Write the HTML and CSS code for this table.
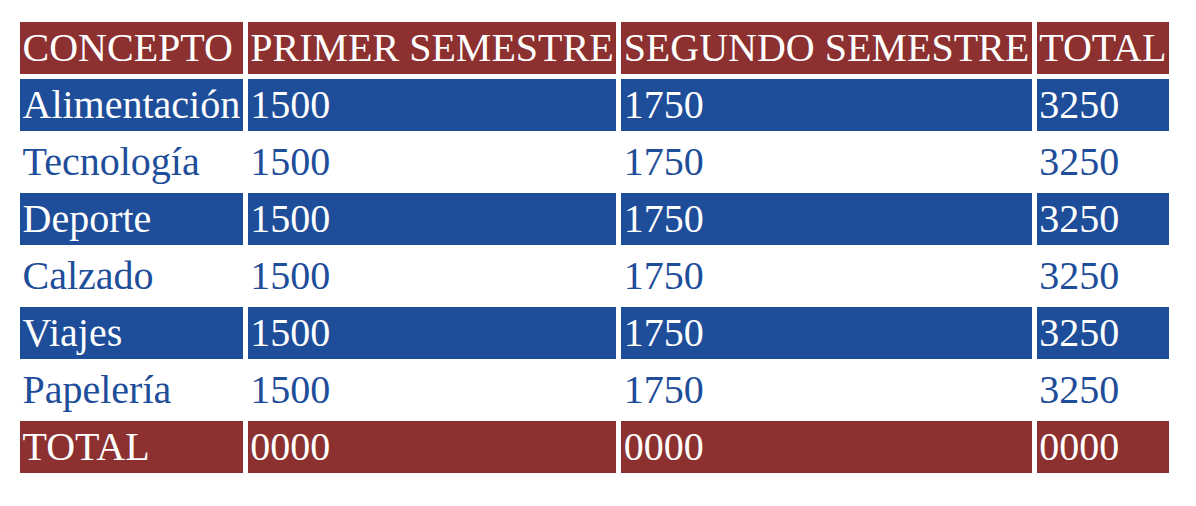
FILE: index.html
```html
<!DOCTYPE html>
<html lang="es">
<head>
<meta charset="utf-8">
<title>Tabla</title>
<link rel="stylesheet" href="styles.css">
</head>
<body>
<table class="tabla">
  <thead>
    <tr class="fila-roja"><td>CONCEPTO</td><td>PRIMER SEMESTRE</td><td>SEGUNDO SEMESTRE</td><td>TOTAL</td></tr>
  </thead>
  <tbody>
    <tr class="fila-azul"><td>Alimentación</td><td>1500</td><td>1750</td><td>3250</td></tr>
    <tr class="fila-blanca"><td>Tecnología</td><td>1500</td><td>1750</td><td>3250</td></tr>
    <tr class="fila-azul"><td>Deporte</td><td>1500</td><td>1750</td><td>3250</td></tr>
    <tr class="fila-blanca"><td>Calzado</td><td>1500</td><td>1750</td><td>3250</td></tr>
    <tr class="fila-azul"><td>Viajes</td><td>1500</td><td>1750</td><td>3250</td></tr>
    <tr class="fila-blanca"><td>Papelería</td><td>1500</td><td>1750</td><td>3250</td></tr>
    <tr class="fila-roja"><td>TOTAL</td><td>0000</td><td>0000</td><td>0000</td></tr>
  </tbody>
</table>
</body>
</html>
```
FILE: styles.css
```css
body {
  margin: 0;
  background: #ffffff;
  font-family: "Liberation Serif", "Times New Roman", serif;
}
.tabla {
  margin: 17px 0 0 15px;
  border-spacing: 5px;
  font-size: 40px;
  line-height: 48px;
}
.tabla td {
  padding: 2px 2.5px;
  text-align: left;
  white-space: nowrap;
}
.fila-roja td {
  background: #8c3030;
  color: #ffffff;
}
.fila-azul td {
  background: #1e4d9a;
  color: #ffffff;
}
.fila-blanca td {
  background: #ffffff;
  color: #1e4d9a;
}
```
